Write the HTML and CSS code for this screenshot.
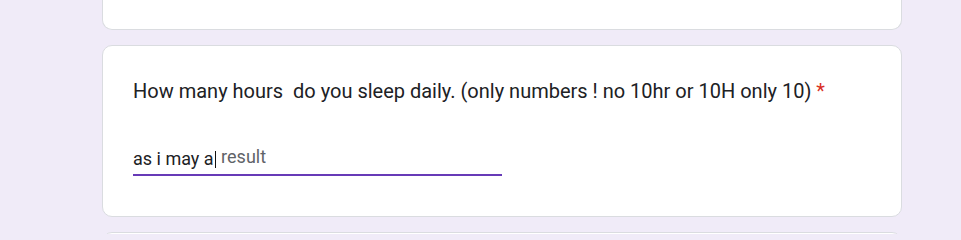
FILE: index.html
```html
<!DOCTYPE html>
<html lang="en">
<head>
<meta charset="utf-8">
<title>Form question</title>
<link rel="stylesheet" href="styles.css">
</head>
<body>
<div class="form">
  <div class="card card-top"></div>
  <div class="card question">
    <div class="title">How many hours  do you sleep daily. (only numbers ! no 10hr or 10H only 10)<span class="req"> *</span></div>
    <div class="answer">
      <div class="field"><span class="typed">as i may a</span><span class="caret"></span><span class="suggest">result</span></div>
    </div>
  </div>
  <div class="card card-next"></div>
</div>
</body>
</html>
```

FILE: styles.css
```css
html, body {
  margin: 0;
  padding: 0;
  background: #f0ebf8;
  overflow: hidden;
}
body {
  width: 961px;
  height: 234px;
  font-family: Roboto, "Liberation Sans", sans-serif;
  color: #202124;
}
.form {
  width: 800px;
  margin-left: 102px;
  display: flex;
  flex-direction: column;
  gap: 15px;
}
.card {
  box-sizing: border-box;
  background: #ffffff;
  border: 1px solid #dadce0;
  border-radius: 10px;
}
.card-top {
  height: 30px;
  border-top: 0;
  border-top-left-radius: 0;
  border-top-right-radius: 0;
}
.question {
  height: 172px;
  padding: 30px 30px 0 30px;
}
.title {
  font-size: 20px;
  line-height: 30px;
  white-space: pre-wrap;
}
.req {
  color: #d93025;
}
.answer {
  margin-top: 41px;
  width: 50%;
}
.field {
  font-size: 18px;
  line-height: 24px;
  padding-bottom: 3px;
  border-bottom: 2px solid #673ab7;
  display: flex;
  align-items: center;
  white-space: pre;
}
.caret {
  display: inline-block;
  width: 1.5px;
  height: 17px;
  margin-left: 1px;
  background: #111111;
}
.suggest {
  margin-left: 5px;
  color: #5f6368;
  position: relative;
  top: -2px;
}
.card-next {
  height: 20px;
}
```
